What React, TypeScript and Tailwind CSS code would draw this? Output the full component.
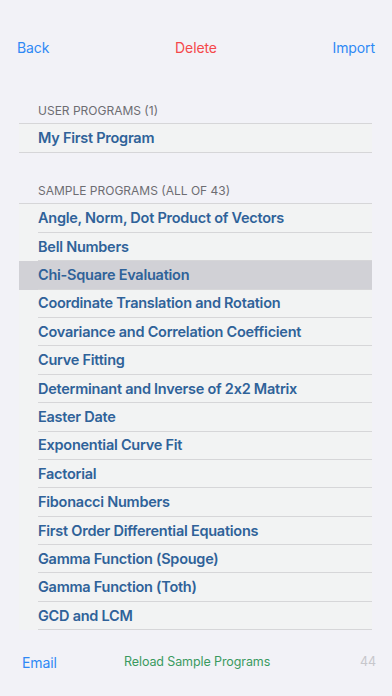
import React from "react"

const samples = [
  "Angle, Norm, Dot Product of Vectors",
  "Bell Numbers",
  "Chi-Square Evaluation",
  "Coordinate Translation and Rotation",
  "Covariance and Correlation Coefficient",
  "Curve Fitting",
  "Determinant and Inverse of 2x2 Matrix",
  "Easter Date",
  "Exponential Curve Fit",
  "Factorial",
  "Fibonacci Numbers",
  "First Order Differential Equations",
  "Gamma Function (Spouge)",
  "Gamma Function (Toth)",
  "GCD and LCM",
]

const Row = ({ label, selected, last }: { label: string; selected?: boolean; last?: boolean }) => (
  <div className={`h-[28.4px] flex items-stretch ${selected ? "bg-[#d1d1d6]" : "bg-[#f2f3f3]"}`}>
    <div
      className={`ml-[19px] flex-1 flex items-center ${last ? "" : "border-b border-[#d6d6d8]"} ${
        selected ? "border-[#d1d1d6]" : ""
      }`}
    >
      <span className="text-[14.5px] font-semibold text-[#2f6299] tracking-[-0.25px]">{label}</span>
    </div>
  </div>
)

export default function App() {
  return (
    <div className="w-[392px] h-[696px] bg-[#f2f2f7] flex flex-col overflow-hidden font-['Inter',sans-serif]">
      {/* top bar */}
      <div className="h-[94px] shrink-0 flex items-start pt-[37px] px-[17px] text-[14px] tracking-[-0.1px]">
        <span className="text-[#2f89f5] w-[100px]">Back</span>
        <span className="flex-1 text-center text-[#f5484a]">Delete</span>
        <span className="text-[#2f89f5] w-[100px] text-right">Import</span>
      </div>

      {/* list */}
      <div className="h-[536px] shrink-0 overflow-hidden mx-[19px] w-[353px]">
        <div className="h-[29px] pl-[19px] flex items-end pb-[3px] text-[12px] text-[#6d6d72] uppercase">
          User Programs (1)
        </div>
        <div className="border-y border-[#d6d6d8]">
          <Row label="My First Program" last />
        </div>

        <div className="h-[50px] pl-[19px] flex items-end pb-[3px] text-[12px] text-[#6d6d72] uppercase">
          Sample Programs (All of 43)
        </div>
        <div className="border-t border-[#d6d6d8]">
          {samples.map((s, i) => (
            <Row key={s} label={s} selected={i === 2} />
          ))}
        </div>
      </div>

      {/* bottom bar */}
      <div className="flex-1 flex items-start pt-[22px] pl-[22px] pr-[16px] text-[14px] tracking-[-0.1px]">
        <span className="text-[#2f89f5] w-[102px]">Email</span>
        <span className="flex-1 text-[12.5px] text-[#3a9a5f] pt-[1px]">Reload Sample Programs</span>
        <span className="text-[#c7c7cc] text-[12.5px] pt-[1px]">44</span>
      </div>
    </div>
  )
}
